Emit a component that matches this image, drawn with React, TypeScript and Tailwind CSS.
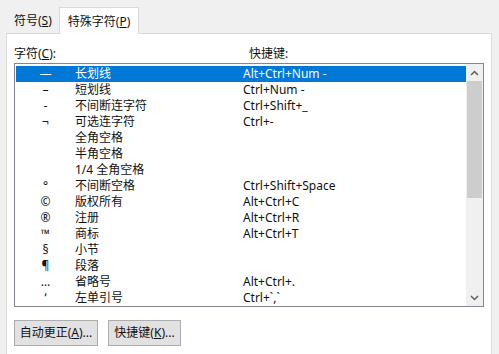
import React from "react";

const rows: [string, string, string][] = [
  ["—", "长划线", "Alt+Ctrl+Num -"],
  ["–", "短划线", "Ctrl+Num -"],
  ["-", "不间断连字符", "Ctrl+Shift+_"],
  ["¬", "可选连字符", "Ctrl+-"],
  ["", "全角空格", ""],
  ["", "半角空格", ""],
  ["", "1/4 全角空格", ""],
  ["°", "不间断空格", "Ctrl+Shift+Space"],
  ["©", "版权所有", "Alt+Ctrl+C"],
  ["®", "注册", "Alt+Ctrl+R"],
  ["™", "商标", "Alt+Ctrl+T"],
  ["§", "小节", ""],
  ["¶", "段落", ""],
  ["…", "省略号", "Alt+Ctrl+."],
  ["‘", "左单引号", "Ctrl+`,`"],
];

const font = {
  fontFamily: '"Noto Sans", "Noto Sans CJK SC", sans-serif',
};

export default function App() {
  return (
    <div
      className="w-[499px] h-[354px] bg-[#f0f0f0] overflow-hidden text-[12px] leading-[16px] text-[#111]"
      style={font}
    >
      {/* tabs */}
      <div className="h-[33px] flex items-end pl-[6px]">
        <div className="h-[24px] px-[8px] pt-[2px] flex items-center mb-[1px]">
          符号(<u>S</u>)
        </div>
        <div className="relative z-10 -mb-[1px] h-[27px] px-[8px] pt-[1px] flex items-center bg-white border border-b-0 border-[#d9d9d9] ml-[-1px]">
          特殊字符(<u>P</u>)
        </div>
      </div>
      {/* panel */}
      <div className="ml-[6px] w-[486px] h-[330px] bg-white border border-[#d9d9d9] px-[7px] pt-[12px]">
        <div className="flex h-[16px]">
          <div className="w-[235px]">
            字符(<u>C</u>):
          </div>
          <div>快捷键:</div>
        </div>
        <div className="mt-[1px] w-[470px] h-[244px] border border-[#828790] flex overflow-hidden">
          <div className="flex-1 pt-[2px] pl-[1px] overflow-hidden">
            {rows.map(([sym, name, key], i) => (
              <div
                key={i}
                className={
                  "flex h-[16px] items-center whitespace-nowrap " +
                  (i === 0 ? "bg-[#0078d7] text-white" : "")
                }
              >
                <div className="w-[59px] text-center">{sym}</div>
                <div className="w-[168px]">{name}</div>
                <div>{key}</div>
              </div>
            ))}
          </div>
          <div className="w-[17px] bg-[#f0f0f0] flex flex-col">
            <div className="h-[17px] flex items-center justify-center">
              <svg width="9" height="6" viewBox="0 0 9 6">
                <path d="M1 5 L4.5 1.5 L8 5" stroke="#606060" strokeWidth="1.5" fill="none" />
              </svg>
            </div>
            <div className="mx-[1px] h-[117px] bg-[#cdcdcd]" />
            <div className="flex-1" />
            <div className="h-[17px] flex items-center justify-center">
              <svg width="9" height="6" viewBox="0 0 9 6">
                <path d="M1 1 L4.5 4.5 L8 1" stroke="#606060" strokeWidth="1.5" fill="none" />
              </svg>
            </div>
          </div>
        </div>
        <div className="mt-[13px] flex gap-[10px]">
          <button className="h-[26px] w-[84px] bg-[#e1e1e1] border border-[#adadad] flex items-center justify-center">
            自动更正(<u>A</u>)...
          </button>
          <button className="h-[26px] w-[73px] bg-[#e1e1e1] border border-[#adadad] flex items-center justify-center">
            快捷键(<u>K</u>)...
          </button>
        </div>
      </div>
    </div>
  );
}
